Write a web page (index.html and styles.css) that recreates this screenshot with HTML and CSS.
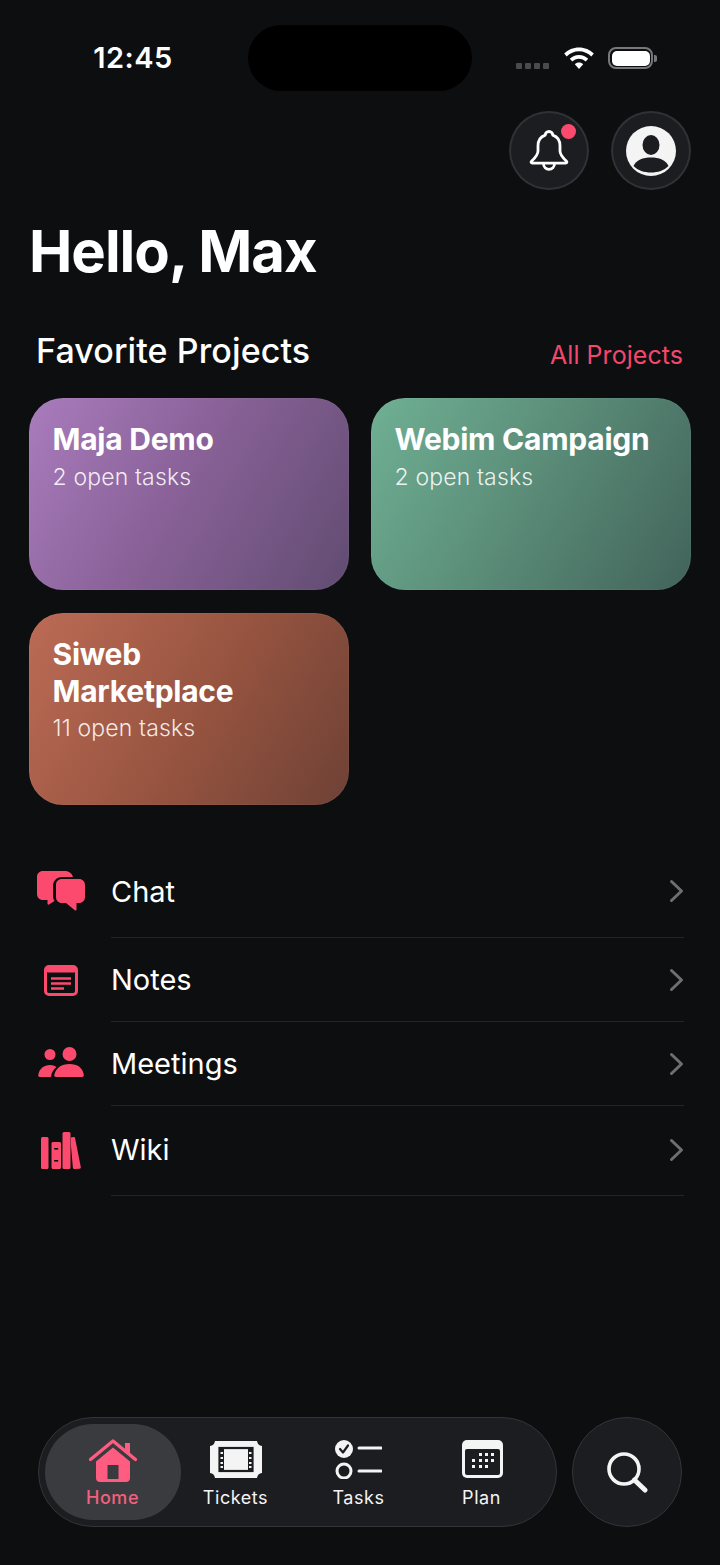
FILE: index.html
```
<!DOCTYPE html>
<html lang="en">
<head>
<meta charset="utf-8">
<title>Home</title>
<link rel="stylesheet" href="styles.css">
</head>
<body>
<div class="page">
  <header class="status">
    <div class="time">12:45</div>
    <div class="island"></div>
    <div class="status-icons">
      <div class="signal"><i></i><i></i><i></i><i></i></div>
      <svg class="wifi" viewBox="0 0 30 22"><path d="M15 0.500C9.300 0.500 4 2.800 0.200 6.600L2.700 9.400C5.900 6.200 10.300 4.200 15 4.200S24.100 6.200 27.300 9.400L29.800 6.600C26 2.800 20.700 0.500 15 0.500ZM15 8C11.400 8 8.200 9.400 5.800 11.800L8.300 14.600C10 12.900 12.400 11.800 15 11.800S20 12.900 21.700 14.600L24.200 11.800C21.800 9.400 18.600 8 15 8ZM15 15.500C13.400 15.500 11.900 16.200 10.800 17.200L15 22L19.200 17.200C18.100 16.200 16.600 15.500 15 15.500Z" fill="#fff"/></svg>
      <div class="battery"><div class="battery-body"><div class="battery-fill"></div></div><div class="battery-nub"></div></div>
    </div>
  </header>

  <div class="actions">
    <button class="round-btn" aria-label="Notifications">
      <svg class="bell" viewBox="0 0 40 42"><path d="M20 2.500C17.800 2.500 16.300 4.200 16.200 6.200C11.500 7.800 9 11.800 9 17V22C9 26 6 29 2.500 32.300C1.700 33.100 2.200 34.200 3.300 34.200H36.700C37.800 34.200 38.300 33.100 37.500 32.300C34 29 31 26 31 22V17C31 11.800 28.500 7.800 23.800 6.200C23.700 4.200 22.200 2.500 20 2.500Z" fill="none" stroke="#fff" stroke-width="2.800" stroke-linejoin="round"/><path d="M14.500 34.500C14.500 38 17 40.300 20 40.300S25.500 38 25.500 34.500" fill="none" stroke="#fff" stroke-width="2.800"/></svg>
      <span class="dot"></span>
    </button>
    <button class="round-btn" aria-label="Profile">
      <svg class="avatar" viewBox="0 0 50 50"><circle cx="25" cy="25" r="25" fill="#f4f4f5"/><ellipse cx="25" cy="19" rx="8.500" ry="10" fill="#1c1d20"/><path d="M7.500 40C10 34 17 31.500 25 31.500S40 34 42.500 40C38 44.500 32 46.500 25 46.500S12 44.500 7.500 40Z" fill="#1c1d20"/></svg>
    </button>
  </div>

  <h1 class="greeting">Hello, Max</h1>

  <div class="section-head">
    <h2 class="section-title">Favorite Projects</h2>
    <a class="section-link">All Projects</a>
  </div>

  <div class="cards">
    <article class="card card-purple">
      <h3 class="card-name">Maja Demo</h3>
      <p class="card-sub">2 open tasks</p>
    </article>
    <article class="card card-green">
      <h3 class="card-name">Webim Campaign</h3>
      <p class="card-sub">2 open tasks</p>
    </article>
    <article class="card card-orange">
      <h3 class="card-name">Siweb<br>Marketplace</h3>
      <p class="card-sub">11 open tasks</p>
    </article>
  </div>

  <nav class="list">
    <div class="row row-first">
      <div class="row-icon">
        <svg class="i-chat" viewBox="0 0 48 40"><path d="M6 0H28C32 0 35 2.500 36 6H25C19.500 6 16 10 16 15V25C16 27 16.500 28.500 17.500 30L12 33.500C11.200 34 10.500 33.500 10.500 32.600V29H6C2.500 29 0 26.500 0 23V6C0 2.500 2.500 0 6 0Z" fill="#fb4a6e"/><path d="M25 8H42C45.500 8 48 10.500 48 14V26C48 29.500 45.500 32 42 32H39.500V38.500C39.500 39.500 38.600 39.800 37.800 39.200L29 32H25C21.500 32 19 29.500 19 26V14C19 10.500 21.500 8 25 8Z" fill="#fb4a6e"/></svg>
      </div>
      <div class="row-body"><span class="row-label">Chat</span><svg class="chev" viewBox="0 0 15 24"><path d="M2.500 2.500L12.500 12L2.500 21.500" fill="none" stroke="#6e6f73" stroke-width="3" stroke-linecap="round" stroke-linejoin="round"/></svg></div>
    </div>
    <div class="row">
      <div class="row-icon">
        <svg class="i-notes" viewBox="0 0 34 31"><rect x="1.500" y="1.500" width="31" height="28" rx="3.500" fill="none" stroke="#fb4a6e" stroke-width="3"/><rect x="1.500" y="1.500" width="31" height="6" rx="2.500" fill="#fb4a6e"/><path d="M7 13.500H27M7 18.500H27M7 23.500H20" stroke="#fb4a6e" stroke-width="2.400"/></svg>
      </div>
      <div class="row-body"><span class="row-label">Notes</span><svg class="chev" viewBox="0 0 15 24"><path d="M2.500 2.500L12.500 12L2.500 21.500" fill="none" stroke="#6e6f73" stroke-width="3" stroke-linecap="round" stroke-linejoin="round"/></svg></div>
    </div>
    <div class="row">
      <div class="row-icon">
        <svg class="i-meet" viewBox="0 0 46 30"><circle cx="12" cy="7.500" r="5.500" fill="#fb4a6e"/><circle cx="31.500" cy="7" r="7" fill="#fb4a6e"/><path d="M1.800 30C0.500 30 0 29 0.300 27.800C1.500 21.500 6 18 12 18C14.500 18 16.800 18.700 18.500 20C15.500 22.300 13.500 25.500 13 30Z" fill="#fb4a6e"/><path d="M18 30C16.500 30 16 29 16.300 27.800C17.800 21 23.500 17 31.500 17S45 21 45.800 27.800C46 29 45.500 30 44 30Z" fill="#fb4a6e"/></svg>
      </div>
      <div class="row-body"><span class="row-label">Meetings</span><svg class="chev" viewBox="0 0 15 24"><path d="M2.500 2.500L12.500 12L2.500 21.500" fill="none" stroke="#6e6f73" stroke-width="3" stroke-linecap="round" stroke-linejoin="round"/></svg></div>
    </div>
    <div class="row row-last">
      <div class="row-icon">
        <svg class="i-wiki" viewBox="0 0 40 37"><rect x="0" y="5" width="7.500" height="32" rx="1.500" fill="#fb4a6e"/><path d="M10.500 11.500C10.500 10.700 11.200 10 12 10H18.500C19.300 10 20 10.700 20 11.500V35.500C20 36.300 19.300 37 18.500 37H12C11.200 37 10.500 36.300 10.500 35.500Z" fill="#fb4a6e"/><rect x="13.200" y="16" width="4" height="1.600" fill="#0c0e10"/><rect x="13.200" y="28" width="4" height="1.600" fill="#0c0e10"/><rect x="21.500" y="0" width="8" height="37" rx="1.500" fill="#fb4a6e"/><path d="M29.800 5.500L32.500 5C33.300 4.900 34 5.400 34.100 6.200L39.800 35C40 35.900 39.500 36.600 38.600 36.800L33.500 37C32.800 37 32 36.500 31.900 35.700L29.800 12Z" fill="#fb4a6e"/></svg>
      </div>
      <div class="row-body"><span class="row-label">Wiki</span><svg class="chev" viewBox="0 0 15 24"><path d="M2.500 2.500L12.500 12L2.500 21.500" fill="none" stroke="#6e6f73" stroke-width="3" stroke-linecap="round" stroke-linejoin="round"/></svg></div>
    </div>
  </nav>

  <footer class="dock">
    <div class="tabbar">
      <div class="tab tab-active">
        <svg class="i-home" viewBox="0 0 48 44"><path d="M1.500 21.500L24 3L46.500 21.500" fill="none" stroke="#ff5c82" stroke-width="3.400" stroke-linecap="round" stroke-linejoin="round"/><rect x="36" y="5" width="5" height="10" fill="#ff5c82"/><path fill-rule="evenodd" d="M24 9.500L41 23.500V40C41 42.500 39.500 44 37 44H11C8.500 44 7 42.500 7 40V23.500ZM18.500 27V41H29.500V27Z" fill="#ff5c82"/></svg>
        <span class="tab-label">Home</span>
      </div>
      <div class="tab">
        <svg class="i-ticket" viewBox="0 0 52 37"><path d="M5 0H47C47.500 3 49 4.500 52 5V32C49 32.500 47.500 34 47 37H5C4.500 34 3 32.500 0 32V5C3 4.500 4.500 3 5 0Z" fill="#f4f4f5"/><rect x="9.500" y="7" width="33" height="23" fill="#f4f4f5" stroke="#1c1d20" stroke-width="2.200"/><rect x="9.500" y="7" width="4.500" height="23" fill="#1c1d20"/><rect x="38" y="7" width="4.500" height="23" fill="#1c1d20"/><path d="M10.500 12H13M10.500 17H13M10.500 22H13M10.500 26H13M39 12H41.500M39 17H41.500M39 22H41.500M39 26H41.500" stroke="#f4f4f5" stroke-width="2.200"/></svg>
        <span class="tab-label">Tickets</span>
      </div>
      <div class="tab">
        <svg class="i-tasks" viewBox="0 0 47 39"><circle cx="9" cy="9" r="9" fill="#f4f4f5"/><path d="M5 9L8 12.500L13 5.500" fill="none" stroke="#1c1d20" stroke-width="2.200" stroke-linecap="round" stroke-linejoin="round"/><circle cx="9" cy="31" r="7" fill="none" stroke="#f4f4f5" stroke-width="3"/><path d="M24 8H46M24 31H46" stroke="#f4f4f5" stroke-width="3" stroke-linecap="round"/></svg>
        <span class="tab-label">Tasks</span>
      </div>
      <div class="tab">
        <svg class="i-plan" viewBox="0 0 41 38"><rect width="41" height="38" rx="5" fill="#f4f4f5"/><rect x="3" y="9" width="35" height="26" rx="2" fill="#1c1d20"/><g fill="#f4f4f5"><rect x="17" y="13" width="3" height="3"/><rect x="23" y="13" width="3" height="3"/><rect x="29" y="13" width="3" height="3"/><rect x="10" y="19" width="3" height="3"/><rect x="17" y="19" width="3" height="3"/><rect x="23" y="19" width="3" height="3"/><rect x="29" y="19" width="3" height="3"/><rect x="10" y="25" width="3" height="3"/><rect x="17" y="25" width="3" height="3"/><rect x="23" y="25" width="3" height="3"/></g></svg>
        <span class="tab-label">Plan</span>
      </div>
    </div>
    <button class="search-btn" aria-label="Search">
      <svg class="i-search" viewBox="0 0 41 41"><circle cx="17" cy="17" r="15" fill="none" stroke="#f4f4f5" stroke-width="3.600"/><path d="M27.500 28L38 38" stroke="#f4f4f5" stroke-width="5" stroke-linecap="round"/></svg>
    </button>
  </footer>
</div>
</body>
</html>
```
FILE: styles.css
```
* { box-sizing: border-box; }
html, body { margin: 0; padding: 0; }
body { background: #0c0e10; color: #fff; font-family: "Inter", "Liberation Sans", sans-serif; }
h1, h2, h3, p { margin: 0; }

.page { width: 720px; height: 1565px; display: flex; flex-direction: column; overflow: hidden; }

.status { display: grid; grid-template-columns: 1fr 224px 1fr; padding-top: 25px; height: 91px; }
.time { font-size: 29px; font-weight: 600; line-height: 66px; text-align: center; padding-left: 18px; letter-spacing: .45px; }
.island { background: #000; border-radius: 33px; height: 66px; }
.status-icons { display: flex; align-items: flex-start; padding: 22px 0 0 44px; }
.signal { display: flex; gap: 3px; margin-top: 16px; }
.signal i { width: 6px; height: 6px; background: #4a4b4f; border-radius: 1px; }
.wifi { width: 30px; height: 22px; margin-left: 15px; }
.battery { display: flex; align-items: center; margin-left: 14px; height: 22px; }
.battery-body { width: 45px; height: 22px; border: 2px solid #77787b; border-radius: 8px; padding: 1.500px; }
.battery-fill { width: 100%; height: 100%; background: #fff; border-radius: 5px; }
.battery-nub { width: 3px; height: 7px; background: #77787b; border-radius: 0 2px 2px 0; margin-left: 1px; }

.actions { display: flex; justify-content: flex-end; gap: 22px; padding-right: 29px; margin-top: 20px; }
.round-btn { position: relative; width: 80px; height: 79px; border-radius: 50%; background: #1c1d20; border: 2px solid #313235; padding: 0; display: flex; align-items: center; justify-content: center; }
.bell { width: 40px; height: 42px; margin-top: -1px; }
.dot { position: absolute; top: 11px; left: 50px; width: 15px; height: 15px; border-radius: 50%; background: #fb4a6e; }
.avatar { width: 50px; height: 50px; }

.greeting { font-size: 58px; font-weight: 700; line-height: 72px; margin-top: 25px; padding-left: 29px; letter-spacing: -1px; }

.section-head { display: flex; justify-content: space-between; align-items: center; padding: 0 37px 0 36px; margin-top: 44px; height: 40px; }
.section-title { font-size: 34px; font-weight: 500; letter-spacing: .1px; margin-top: -2px; }
.section-link { font-size: 25px; font-weight: 400; color: #f4476c; padding-top: 8px; letter-spacing: .05px; }

.cards { display: grid; grid-template-columns: 320px 320px; gap: 23px 22px; padding: 0 29px; margin-top: 27px; }
.card { height: 192px; border-radius: 34px; padding: 23px 23.500px; box-shadow: inset 0 0 0 1px rgba(255,255,255,.04); }
.card-purple { background: linear-gradient(120deg, #a97cbc 0%, #8a6299 45%, #614c71 100%); }
.card-green { background: linear-gradient(120deg, #6fb094 0%, #5c8f7a 45%, #42635a 100%); }
.card-orange { background: linear-gradient(120deg, #bc6b55 0%, #95533f 55%, #6e4136 100%); }
.card-name { font-size: 30px; font-weight: 700; line-height: 36.500px; letter-spacing: -.25px; }
.card-sub { font-size: 23px; font-weight: 300; line-height: 30px; margin-top: 4px; color: rgba(255,255,255,.88); letter-spacing: .15px; }

.list { padding: 0 36px 0 21px; margin-top: 45px; }
.row { display: flex; height: 84px; }
.row-first { height: 88px; }
.row-first .row-body { padding-bottom: 5px; }
.row-last { height: 90px; }
.row-last .row-body { padding-bottom: 2px; }
.row-icon { width: 80px; margin-right: 10px; flex: none; display: flex; align-items: center; justify-content: center; }
.row-body { flex: 1; display: flex; align-items: center; justify-content: space-between; border-bottom: 1px solid #232427; }
.row-label { font-size: 29px; font-weight: 400; }
.chev { width: 15px; height: 24px; }
.i-chat { width: 48px; height: 40px; margin-bottom: 6px; }
.i-notes { width: 34px; height: 31px; }
.i-meet { width: 46px; height: 30px; margin-bottom: 4px; }
.i-wiki { width: 40px; height: 37px; margin-bottom: 2px; }

.dock { margin-top: auto; display: flex; gap: 15px; padding: 0 0 38px 38px; }
.tabbar { width: 519px; height: 110px; border-radius: 55px; background: #1c1d20; border: 1.500px solid #343538; padding: 6px 0 6px 12px; display: grid; grid-template-columns: repeat(4, 123px); }
.tab { display: flex; flex-direction: column; align-items: center; height: 96px; }
.tab svg { margin-top: 16px; flex: none; }
.tab-active { margin: 0 -6.500px; background: #3a3b3e; border-radius: 48px; }
.tab-label { font-size: 18px; font-weight: 400; letter-spacing: .55px; line-height: 24px; color: #f4f4f5; margin-top: auto; margin-bottom: 10px; }
.tab-active .tab-label { color: #f0607f; font-weight: 500; }
.i-home { width: 48px; height: 44px; margin-top: 14px !important; }
.i-ticket { width: 52px; height: 37px; margin-top: 17px !important; }
.i-tasks { width: 47px; height: 39px; }
.i-plan { width: 41px; height: 38px; margin-left: 1px; }
.search-btn { width: 110px; height: 110px; border-radius: 50%; background: #1c1d20; border: 1.500px solid #343538; padding: 0; display: flex; align-items: center; justify-content: center; }
.i-search { width: 41px; height: 41px; margin-left: 1px; }
```
